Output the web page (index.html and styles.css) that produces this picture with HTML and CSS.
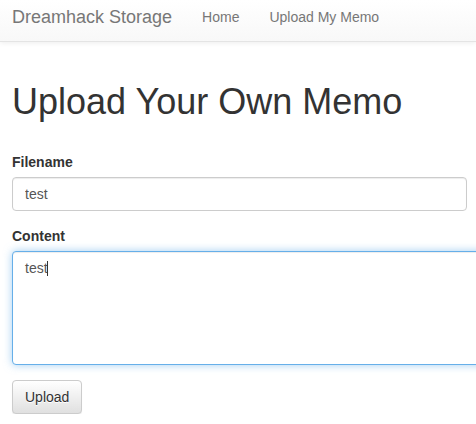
FILE: index.html
```html
<!DOCTYPE html>
<html>
<head>
<meta charset="utf-8">
<title>Dreamhack Storage</title>
<link rel="stylesheet" href="styles.css">
</head>
<body>
<nav class="navbar">
  <a class="brand" href="#">Dreamhack Storage</a>
  <ul class="nav">
    <li><a href="#">Home</a></li>
    <li><a href="#">Upload My Memo</a></li>
  </ul>
</nav>
<main class="container">
  <h1 class="title">Upload Your Own Memo</h1>
  <form class="memo-form">
    <div class="form-group">
      <label class="label" for="filename">Filename</label>
      <input class="form-control" id="filename" type="text" value="test">
    </div>
    <div class="form-group">
      <label class="label" for="content">Content</label>
      <div class="textarea-wrap">
        <textarea class="form-control textarea focused" id="content" rows="5">test</textarea>
        <span class="caret"></span>
      </div>
    </div>
    <button class="btn" type="button">Upload</button>
  </form>
</main>
</body>
</html>
```

FILE: styles.css
```css
html {
  overflow: hidden;
}
body {
  margin: 0;
  font-family: "Liberation Sans", Arial, sans-serif;
  font-size: 14px;
  line-height: 20px;
  color: #333;
  background: #fff;
}
.navbar {
  display: flex;
  align-items: flex-start;
  height: 41px;
  border-bottom: 1px solid #e4e4e4;
  background-image: linear-gradient(to bottom, #fff 0, #f8f8f8 100%);
  box-shadow: inset 0 1px 0 rgba(255,255,255,.15), 0 1px 5px rgba(0,0,0,.075);
  padding-left: 12px;
}
.brand {
  font-size: 18px;
  line-height: 20px;
  color: #777;
  text-decoration: none;
  padding: 7px 15px 0 0;
}
.nav {
  display: flex;
  list-style: none;
  margin: 0;
  padding: 0;
}
.nav a {
  display: block;
  padding: 7px 15px 0;
  color: #777;
  text-decoration: none;
  font-size: 14px;
  line-height: 20px;
}
.container {
  padding: 0 9px 0 12px;
}
.title {
  font-size: 36px;
  font-weight: normal;
  line-height: 1.1;
  margin: 40px 0 30px;
  color: #333;
}
.memo-form {
  margin: 0;
}
.form-group {
  margin-bottom: 15px;
}
.label {
  display: inline-block;
  font-weight: bold;
  margin-bottom: 5px;
}
.form-control {
  display: block;
  box-sizing: border-box;
  width: 100%;
  height: 34px;
  padding: 6px 12px;
  font-family: "Liberation Sans", Arial, sans-serif;
  font-size: 14px;
  line-height: 20px;
  color: #555;
  background: #fff;
  border: 1px solid #ccc;
  border-radius: 4px;
  box-shadow: inset 0 1px 1px rgba(0,0,0,.075);
  margin: 0;
  outline: none;
}
.textarea-wrap {
  position: relative;
}
.textarea {
  height: 114px;
  width: 520px;
  resize: none;
  overflow: hidden;
}
.focused {
  border-color: #66afe9;
  box-shadow: inset 0 1px 1px rgba(0,0,0,.075), 0 0 8px rgba(102,175,233,.6);
}
.caret {
  position: absolute;
  left: 35px;
  top: 10px;
  width: 1px;
  height: 15px;
  background: #333;
}
.btn {
  display: inline-block;
  height: 34px;
  padding: 6px 12px;
  font-family: "Liberation Sans", Arial, sans-serif;
  font-size: 14px;
  line-height: 20px;
  color: #333;
  text-shadow: 0 1px 0 #fff;
  background-image: linear-gradient(to bottom, #fff 0, #e0e0e0 100%);
  border: 1px solid #ccc;
  border-radius: 4px;
  box-shadow: inset 0 1px 0 rgba(255,255,255,.15), 0 1px 1px rgba(0,0,0,.075);
  margin: 0;
}
```
